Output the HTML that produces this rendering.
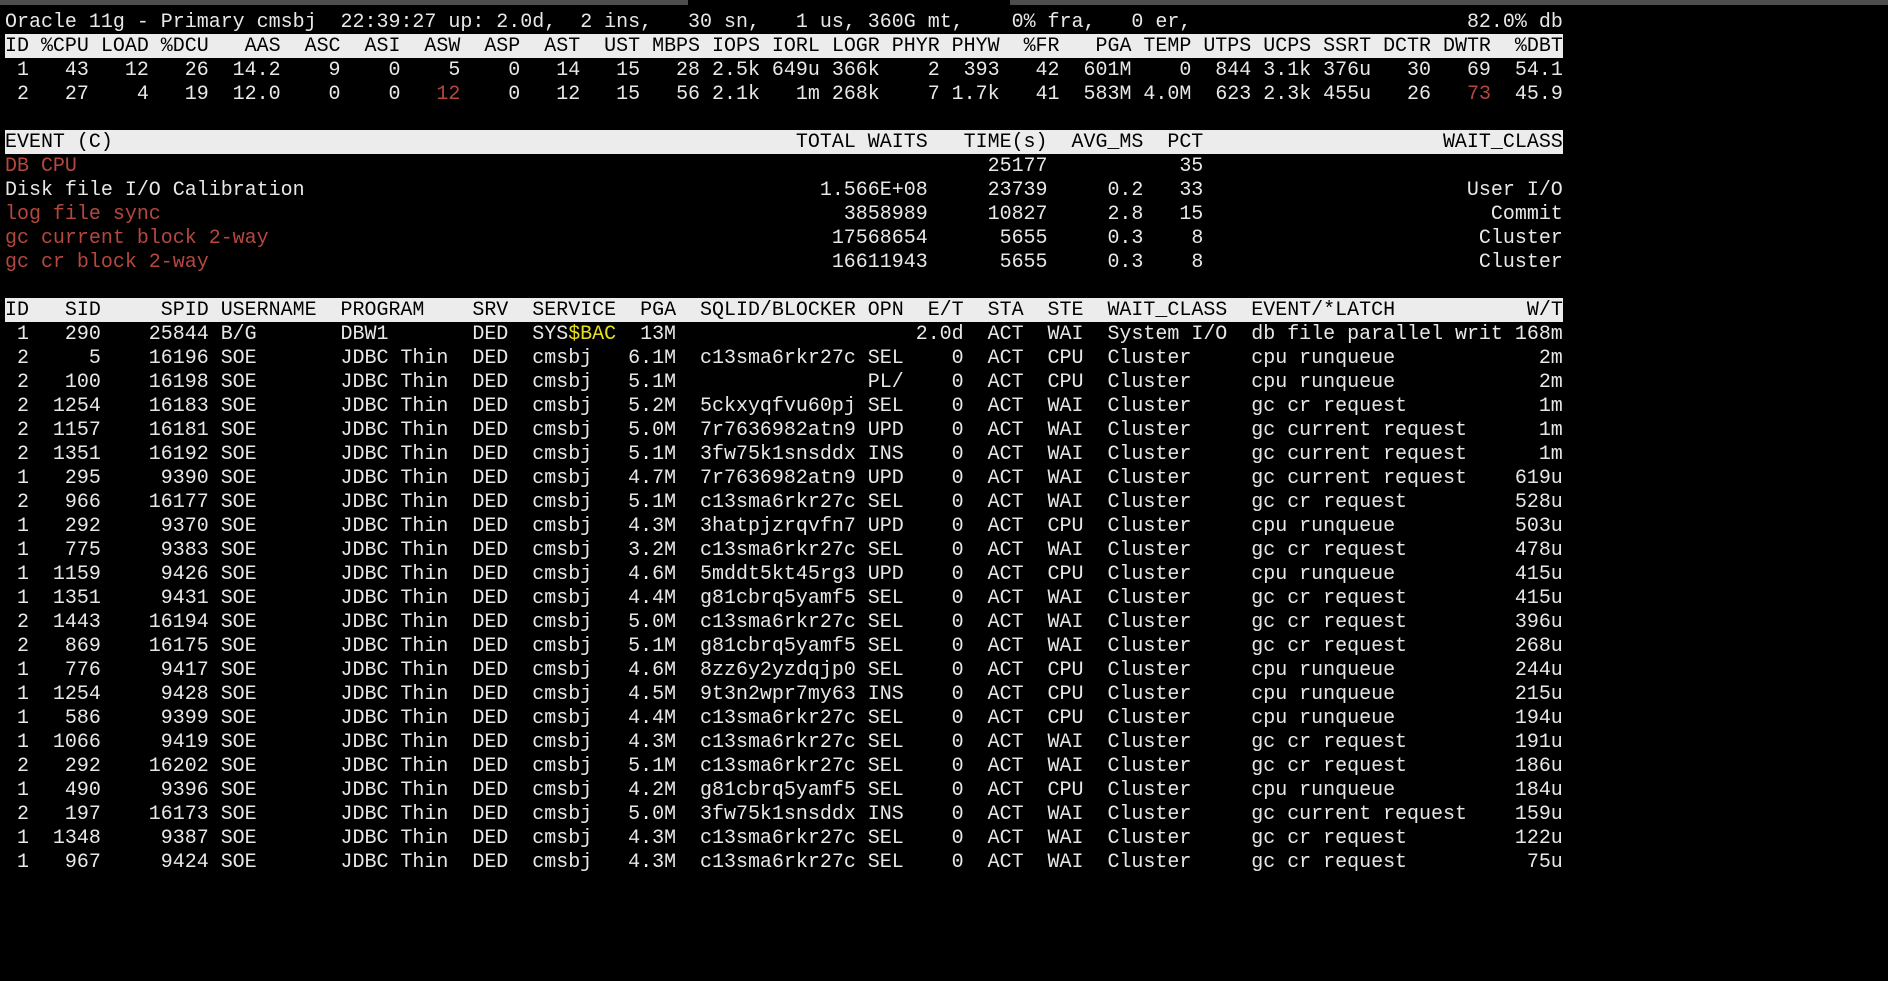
<!DOCTYPE html>
<html><head><meta charset="utf-8">
<style>
html,body{margin:0;padding:0;background:#000;}
body{width:1888px;height:981px;overflow:hidden;position:relative;font-family:"Liberation Mono","DejaVu Sans Mono",monospace;font-size:19.98px;color:#e8e8e8;}
.tab{position:absolute;top:0;height:5px;background:#4d4d4d;}
#w{position:absolute;left:5px;top:2px;}
.ln{position:absolute;left:0;height:24px;line-height:24px;width:130ch;white-space:pre;}
.bar{background:#ececec;color:#000;}
.ln span{position:absolute;top:0;white-space:pre;}
.red{color:#b5473e;}
.yel{color:#e6e020;}
.a{left:0;width:2ch;text-align:right}
.b{left:2ch;width:6ch;text-align:right}
.c{left:8ch;width:9ch;text-align:right}
.d{left:18ch}.e{left:28ch}.f{left:39ch}.g{left:44ch}
.h{left:52ch;width:4ch;text-align:right}
.i{left:58ch}.j{left:72ch}
.k{left:76ch;width:4ch;text-align:right}
.l{left:82ch}.m{left:87ch}.n{left:92ch}.o{left:104ch}
.p{left:125ch;width:5ch;text-align:right}
.e0{left:0}
.e1{left:66ch;width:11ch;text-align:right}
.e2{left:77ch;width:10ch;text-align:right}
.e3{left:87ch;width:8ch;text-align:right}
.e4{left:95ch;width:5ch;text-align:right}
.e5{left:110ch;width:20ch;text-align:right}
</style></head><body>
<div class="tab" style="left:0;width:688px"></div>
<div class="tab" style="left:1010px;width:878px"></div>
<div id="w">
<div class="ln" style="top:8px">Oracle 11g - Primary cmsbj  22:39:27 up: 2.0d,  2 ins,   30 sn,   1 us, 360G mt,    0% fra,   0 er,                       82.0% db</div>
<div class="ln bar" style="top:32px">ID %CPU LOAD %DCU   AAS  ASC  ASI  ASW  ASP  AST  UST MBPS IOPS IORL LOGR PHYR PHYW  %FR   PGA TEMP UTPS UCPS SSRT DCTR DWTR  %DBT</div>
<div class="ln" style="top:56px"> 1   43   12   26  14.2    9    0    5    0   14   15   28 2.5k 649u 366k    2  393   42  601M    0  844 3.1k 376u   30   69  54.1</div>
<div class="ln" style="top:80px"> 2   27    4   19  12.0    0    0   <i class="red" style="font-style:normal">12</i>    0   12   15   56 2.1k   1m 268k    7 1.7k   41  583M 4.0M  623 2.3k 455u   26   <i class="red" style="font-style:normal">73</i>  45.9</div>

<div class="ln bar" style="top:128px"><span class="e0">EVENT (C)</span><span class="e1">TOTAL WAITS</span><span class="e2">TIME(s)</span><span class="e3">AVG_MS</span><span class="e4">PCT</span><span class="e5">WAIT_CLASS</span></div>
<div class="ln" style="top:152px"><span class="e0 red">DB CPU</span><span class="e2">25177</span><span class="e4">35</span></div>
<div class="ln" style="top:176px"><span class="e0">Disk file I/O Calibration</span><span class="e1">1.566E+08</span><span class="e2">23739</span><span class="e3">0.2</span><span class="e4">33</span><span class="e5">User I/O</span></div>
<div class="ln" style="top:200px"><span class="e0 red">log file sync</span><span class="e1">3858989</span><span class="e2">10827</span><span class="e3">2.8</span><span class="e4">15</span><span class="e5">Commit</span></div>
<div class="ln" style="top:224px"><span class="e0 red">gc current block 2-way</span><span class="e1">17568654</span><span class="e2">5655</span><span class="e3">0.3</span><span class="e4">8</span><span class="e5">Cluster</span></div>
<div class="ln" style="top:248px"><span class="e0 red">gc cr block 2-way</span><span class="e1">16611943</span><span class="e2">5655</span><span class="e3">0.3</span><span class="e4">8</span><span class="e5">Cluster</span></div>

<div class="ln bar" style="top:296px"><span style="left:0">ID</span><span style="left:5ch">SID</span><span style="left:13ch">SPID</span><span class="d">USERNAME</span><span class="e">PROGRAM</span><span class="f">SRV</span><span class="g">SERVICE</span><span style="left:53ch">PGA</span><span class="i">SQLID/BLOCKER</span><span class="j">OPN</span><span style="left:77ch">E/T</span><span class="l">STA</span><span class="m">STE</span><span class="n">WAIT_CLASS</span><span class="o">EVENT/*LATCH</span><span style="left:127ch">W/T</span></div>

<div class="ln" style="top:320px"><span class="a">1</span><span class="b">290</span><span class="c">25844</span><span class="d">B/G</span><span class="e">DBW1</span><span class="f">DED</span><span class="g">SYS<b class="yel" style="font-weight:normal">$BAC</b></span><span class="h">13M</span><span class="k">2.0d</span><span class="l">ACT</span><span class="m">WAI</span><span class="n">System I/O</span><span class="o">db file parallel writ</span><span class="p">168m</span></div>
<div class="ln" style="top:344px"><span class="a">2</span><span class="b">5</span><span class="c">16196</span><span class="d">SOE</span><span class="e">JDBC Thin</span><span class="f">DED</span><span class="g">cmsbj</span><span class="h">6.1M</span><span class="i">c13sma6rkr27c</span><span class="j">SEL</span><span class="k">0</span><span class="l">ACT</span><span class="m">CPU</span><span class="n">Cluster</span><span class="o">cpu runqueue</span><span class="p">2m</span></div>
<div class="ln" style="top:368px"><span class="a">2</span><span class="b">100</span><span class="c">16198</span><span class="d">SOE</span><span class="e">JDBC Thin</span><span class="f">DED</span><span class="g">cmsbj</span><span class="h">5.1M</span><span class="j">PL/</span><span class="k">0</span><span class="l">ACT</span><span class="m">CPU</span><span class="n">Cluster</span><span class="o">cpu runqueue</span><span class="p">2m</span></div>
<div class="ln" style="top:392px"><span class="a">2</span><span class="b">1254</span><span class="c">16183</span><span class="d">SOE</span><span class="e">JDBC Thin</span><span class="f">DED</span><span class="g">cmsbj</span><span class="h">5.2M</span><span class="i">5ckxyqfvu60pj</span><span class="j">SEL</span><span class="k">0</span><span class="l">ACT</span><span class="m">WAI</span><span class="n">Cluster</span><span class="o">gc cr request</span><span class="p">1m</span></div>
<div class="ln" style="top:416px"><span class="a">2</span><span class="b">1157</span><span class="c">16181</span><span class="d">SOE</span><span class="e">JDBC Thin</span><span class="f">DED</span><span class="g">cmsbj</span><span class="h">5.0M</span><span class="i">7r7636982atn9</span><span class="j">UPD</span><span class="k">0</span><span class="l">ACT</span><span class="m">WAI</span><span class="n">Cluster</span><span class="o">gc current request</span><span class="p">1m</span></div>
<div class="ln" style="top:440px"><span class="a">2</span><span class="b">1351</span><span class="c">16192</span><span class="d">SOE</span><span class="e">JDBC Thin</span><span class="f">DED</span><span class="g">cmsbj</span><span class="h">5.1M</span><span class="i">3fw75k1snsddx</span><span class="j">INS</span><span class="k">0</span><span class="l">ACT</span><span class="m">WAI</span><span class="n">Cluster</span><span class="o">gc current request</span><span class="p">1m</span></div>
<div class="ln" style="top:464px"><span class="a">1</span><span class="b">295</span><span class="c">9390</span><span class="d">SOE</span><span class="e">JDBC Thin</span><span class="f">DED</span><span class="g">cmsbj</span><span class="h">4.7M</span><span class="i">7r7636982atn9</span><span class="j">UPD</span><span class="k">0</span><span class="l">ACT</span><span class="m">WAI</span><span class="n">Cluster</span><span class="o">gc current request</span><span class="p">619u</span></div>
<div class="ln" style="top:488px"><span class="a">2</span><span class="b">966</span><span class="c">16177</span><span class="d">SOE</span><span class="e">JDBC Thin</span><span class="f">DED</span><span class="g">cmsbj</span><span class="h">5.1M</span><span class="i">c13sma6rkr27c</span><span class="j">SEL</span><span class="k">0</span><span class="l">ACT</span><span class="m">WAI</span><span class="n">Cluster</span><span class="o">gc cr request</span><span class="p">528u</span></div>
<div class="ln" style="top:512px"><span class="a">1</span><span class="b">292</span><span class="c">9370</span><span class="d">SOE</span><span class="e">JDBC Thin</span><span class="f">DED</span><span class="g">cmsbj</span><span class="h">4.3M</span><span class="i">3hatpjzrqvfn7</span><span class="j">UPD</span><span class="k">0</span><span class="l">ACT</span><span class="m">CPU</span><span class="n">Cluster</span><span class="o">cpu runqueue</span><span class="p">503u</span></div>
<div class="ln" style="top:536px"><span class="a">1</span><span class="b">775</span><span class="c">9383</span><span class="d">SOE</span><span class="e">JDBC Thin</span><span class="f">DED</span><span class="g">cmsbj</span><span class="h">3.2M</span><span class="i">c13sma6rkr27c</span><span class="j">SEL</span><span class="k">0</span><span class="l">ACT</span><span class="m">WAI</span><span class="n">Cluster</span><span class="o">gc cr request</span><span class="p">478u</span></div>
<div class="ln" style="top:560px"><span class="a">1</span><span class="b">1159</span><span class="c">9426</span><span class="d">SOE</span><span class="e">JDBC Thin</span><span class="f">DED</span><span class="g">cmsbj</span><span class="h">4.6M</span><span class="i">5mddt5kt45rg3</span><span class="j">UPD</span><span class="k">0</span><span class="l">ACT</span><span class="m">CPU</span><span class="n">Cluster</span><span class="o">cpu runqueue</span><span class="p">415u</span></div>
<div class="ln" style="top:584px"><span class="a">1</span><span class="b">1351</span><span class="c">9431</span><span class="d">SOE</span><span class="e">JDBC Thin</span><span class="f">DED</span><span class="g">cmsbj</span><span class="h">4.4M</span><span class="i">g81cbrq5yamf5</span><span class="j">SEL</span><span class="k">0</span><span class="l">ACT</span><span class="m">WAI</span><span class="n">Cluster</span><span class="o">gc cr request</span><span class="p">415u</span></div>
<div class="ln" style="top:608px"><span class="a">2</span><span class="b">1443</span><span class="c">16194</span><span class="d">SOE</span><span class="e">JDBC Thin</span><span class="f">DED</span><span class="g">cmsbj</span><span class="h">5.0M</span><span class="i">c13sma6rkr27c</span><span class="j">SEL</span><span class="k">0</span><span class="l">ACT</span><span class="m">WAI</span><span class="n">Cluster</span><span class="o">gc cr request</span><span class="p">396u</span></div>
<div class="ln" style="top:632px"><span class="a">2</span><span class="b">869</span><span class="c">16175</span><span class="d">SOE</span><span class="e">JDBC Thin</span><span class="f">DED</span><span class="g">cmsbj</span><span class="h">5.1M</span><span class="i">g81cbrq5yamf5</span><span class="j">SEL</span><span class="k">0</span><span class="l">ACT</span><span class="m">WAI</span><span class="n">Cluster</span><span class="o">gc cr request</span><span class="p">268u</span></div>
<div class="ln" style="top:656px"><span class="a">1</span><span class="b">776</span><span class="c">9417</span><span class="d">SOE</span><span class="e">JDBC Thin</span><span class="f">DED</span><span class="g">cmsbj</span><span class="h">4.6M</span><span class="i">8zz6y2yzdqjp0</span><span class="j">SEL</span><span class="k">0</span><span class="l">ACT</span><span class="m">CPU</span><span class="n">Cluster</span><span class="o">cpu runqueue</span><span class="p">244u</span></div>
<div class="ln" style="top:680px"><span class="a">1</span><span class="b">1254</span><span class="c">9428</span><span class="d">SOE</span><span class="e">JDBC Thin</span><span class="f">DED</span><span class="g">cmsbj</span><span class="h">4.5M</span><span class="i">9t3n2wpr7my63</span><span class="j">INS</span><span class="k">0</span><span class="l">ACT</span><span class="m">CPU</span><span class="n">Cluster</span><span class="o">cpu runqueue</span><span class="p">215u</span></div>
<div class="ln" style="top:704px"><span class="a">1</span><span class="b">586</span><span class="c">9399</span><span class="d">SOE</span><span class="e">JDBC Thin</span><span class="f">DED</span><span class="g">cmsbj</span><span class="h">4.4M</span><span class="i">c13sma6rkr27c</span><span class="j">SEL</span><span class="k">0</span><span class="l">ACT</span><span class="m">CPU</span><span class="n">Cluster</span><span class="o">cpu runqueue</span><span class="p">194u</span></div>
<div class="ln" style="top:728px"><span class="a">1</span><span class="b">1066</span><span class="c">9419</span><span class="d">SOE</span><span class="e">JDBC Thin</span><span class="f">DED</span><span class="g">cmsbj</span><span class="h">4.3M</span><span class="i">c13sma6rkr27c</span><span class="j">SEL</span><span class="k">0</span><span class="l">ACT</span><span class="m">WAI</span><span class="n">Cluster</span><span class="o">gc cr request</span><span class="p">191u</span></div>
<div class="ln" style="top:752px"><span class="a">2</span><span class="b">292</span><span class="c">16202</span><span class="d">SOE</span><span class="e">JDBC Thin</span><span class="f">DED</span><span class="g">cmsbj</span><span class="h">5.1M</span><span class="i">c13sma6rkr27c</span><span class="j">SEL</span><span class="k">0</span><span class="l">ACT</span><span class="m">WAI</span><span class="n">Cluster</span><span class="o">gc cr request</span><span class="p">186u</span></div>
<div class="ln" style="top:776px"><span class="a">1</span><span class="b">490</span><span class="c">9396</span><span class="d">SOE</span><span class="e">JDBC Thin</span><span class="f">DED</span><span class="g">cmsbj</span><span class="h">4.2M</span><span class="i">g81cbrq5yamf5</span><span class="j">SEL</span><span class="k">0</span><span class="l">ACT</span><span class="m">CPU</span><span class="n">Cluster</span><span class="o">cpu runqueue</span><span class="p">184u</span></div>
<div class="ln" style="top:800px"><span class="a">2</span><span class="b">197</span><span class="c">16173</span><span class="d">SOE</span><span class="e">JDBC Thin</span><span class="f">DED</span><span class="g">cmsbj</span><span class="h">5.0M</span><span class="i">3fw75k1snsddx</span><span class="j">INS</span><span class="k">0</span><span class="l">ACT</span><span class="m">WAI</span><span class="n">Cluster</span><span class="o">gc current request</span><span class="p">159u</span></div>
<div class="ln" style="top:824px"><span class="a">1</span><span class="b">1348</span><span class="c">9387</span><span class="d">SOE</span><span class="e">JDBC Thin</span><span class="f">DED</span><span class="g">cmsbj</span><span class="h">4.3M</span><span class="i">c13sma6rkr27c</span><span class="j">SEL</span><span class="k">0</span><span class="l">ACT</span><span class="m">WAI</span><span class="n">Cluster</span><span class="o">gc cr request</span><span class="p">122u</span></div>
<div class="ln" style="top:848px"><span class="a">1</span><span class="b">967</span><span class="c">9424</span><span class="d">SOE</span><span class="e">JDBC Thin</span><span class="f">DED</span><span class="g">cmsbj</span><span class="h">4.3M</span><span class="i">c13sma6rkr27c</span><span class="j">SEL</span><span class="k">0</span><span class="l">ACT</span><span class="m">WAI</span><span class="n">Cluster</span><span class="o">gc cr request</span><span class="p">75u</span></div>
</div>
</body></html>
